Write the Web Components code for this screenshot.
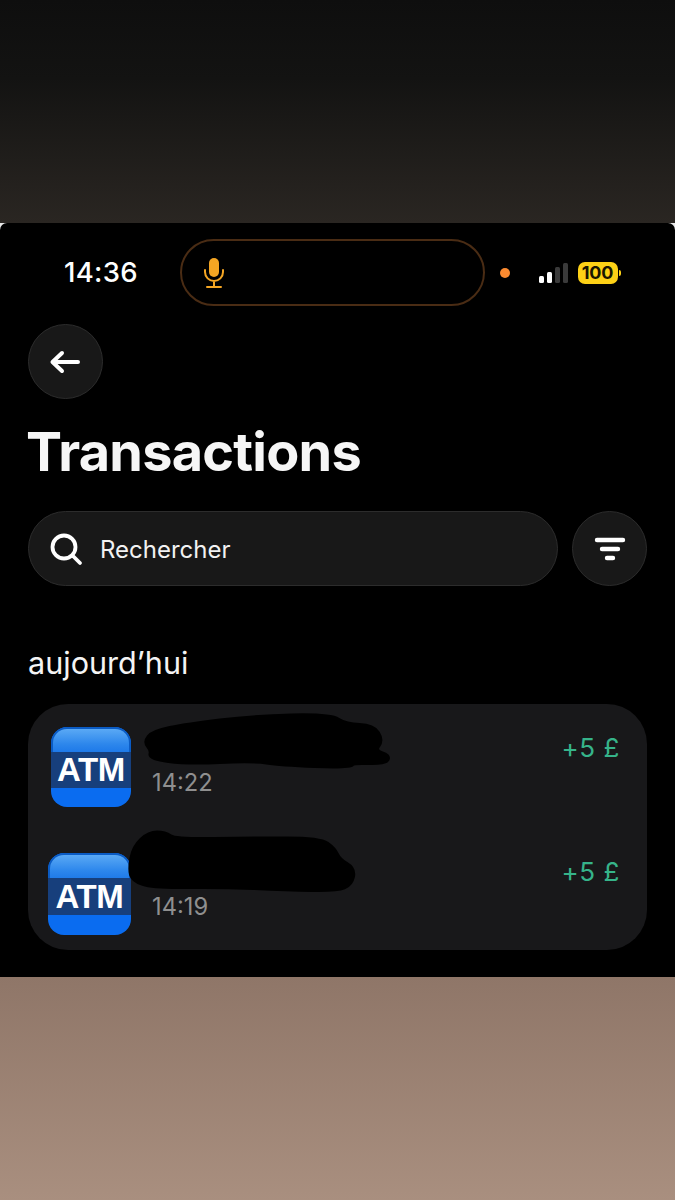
<!DOCTYPE html>
<html lang="fr">
<head>
<meta charset="utf-8">
<title>Transactions</title>
<style>
  html, body { margin: 0; padding: 0; background: #000; }
  body { font-family: Inter, "Liberation Sans", sans-serif; }
  .backdrop-top { height: 223px; background: linear-gradient(#0e0e0e, #131312 35%, #2a2622); }
  .backdrop-bottom { height: 223px; background: linear-gradient(#8f7668, #a98f7f); }
  h1 { margin: 19px 0 0 -2px; font-size: 54px; line-height: 68px; font-weight: 700; letter-spacing: -.75px; color: #f6f6f6; }
  h2 { margin: 58px 0 0; font-size: 30.6px; line-height: 38px; font-weight: 400; color: #f4f4f4; }
  .tools { display: flex; gap: 14px; margin-top: 25px; }
</style>
</head>
<body>

<template id="tpl-status-bar">
  <style>
    :host { display: flex; align-items: center; height: 67px; margin-top: 16px; padding-left: 64px; color: #fff; }
    .time { width: 115.5px; font-size: 27.5px; font-weight: 500; letter-spacing: .3px; line-height: 1; }
    .island { box-sizing: border-box; width: 305px; height: 67px; border: 2px solid #4a2c14; border-radius: 34px;
      display: flex; align-items: center; padding-left: 21px; }
    .dot { width: 10px; height: 10px; border-radius: 50%; background: #fb8a30; margin-left: 15px; }
    .signal { display: flex; align-items: flex-end; gap: 2.5px; margin-left: 29px; height: 20px; }
    .signal i { display: block; width: 5.5px; border-radius: 1.5px; background: #fff; }
    .signal i:nth-child(1) { height: 7px; }
    .signal i:nth-child(2) { height: 11px; }
    .signal i:nth-child(3) { height: 16px; background: #3a3a3a; }
    .signal i:nth-child(4) { height: 20px; background: #3a3a3a; }
    .battery { display: flex; align-items: center; margin-left: 9.5px; }
    .level { width: 40px; height: 22px; border-radius: 7px; background: #fdd116; color: #1a1500;
      font-size: 18px; font-weight: 700; line-height: 22px; text-align: center; letter-spacing: -.2px; }
    .tip { width: 2px; height: 6px; background: #fdd116; border-radius: 0 2px 2px 0; margin-left: 1px; }
  </style>
  <span class="time">14:36</span>
  <div class="island">
    <svg width="22" height="32" viewBox="0 0 22 32" fill="none">
      <rect x="6" y="1" width="10" height="19" rx="5" fill="#f5a623"/>
      <path d="M2 13v2a9 9 0 0 0 18 0v-2M11 24v6M4 30h14" stroke="#f5a623" stroke-width="2" stroke-linecap="round"/>
    </svg>
  </div>
  <span class="dot"></span>
  <div class="signal"><i></i><i></i><i></i><i></i></div>
  <div class="battery"><span class="level">100</span><span class="tip"></span></div>
</template>

<template id="tpl-round-button">
  <style>
    :host { box-sizing: border-box; display: flex; align-items: center; justify-content: center; flex: none;
      width: 75px; height: 75px; border-radius: 50%; background: #181818; border: 1.5px solid #2c2c2c; }
  </style>
  <slot></slot>
</template>

<template id="tpl-search-bar">
  <style>
    :host { box-sizing: border-box; display: flex; align-items: center; flex: 1; height: 75px; padding: 1px 0 0 20px;
      border-radius: 38px; background: #181818; border: 1.5px solid #2c2c2c; color: #f2f2f2; font-size: 24px; }
    svg { margin: -1px 17px 0 0; }
  </style>
  <svg width="34" height="34" viewBox="0 0 34 34" fill="none" stroke="#fff" stroke-width="3.8" stroke-linecap="round">
    <circle cx="15" cy="15" r="11.5"/>
    <path d="M24 24l7 7"/>
  </svg>
  <slot></slot>
</template>

<template id="tpl-atm-icon">
  <style>
    :host { display: block; box-sizing: border-box; flex: none; position: relative; overflow: hidden;
      width: var(--w, 81px); height: var(--h, 81px); border-radius: 16px; background: #0a6cf0; }
    .shine { position: absolute; left: 0; right: 0; top: 0; height: 34%; border-radius: 16px 16px 0 0; background: #0a5bc4; }
    .shine::after { content: ""; position: absolute; inset: 2px 2px 0; border-radius: 14px 14px 0 0;
      background: linear-gradient(#5aa9f5, #2d87ec 60%, #1a76e8); }
    .band { position: absolute; left: 0; right: 0; top: 31%; height: 45%; background: #173f7c;
      display: flex; align-items: center; justify-content: center;
      color: #fff; font-family: "Liberation Sans", Arimo, sans-serif; font-weight: 700;
      font-size: 33px; letter-spacing: -.3px; line-height: 1; }
  </style>
  <div class="shine"></div>
  <div class="band">ATM</div>
</template>

<template id="tpl-tx-row">
  <style>
    :host { display: grid; grid-template-columns: 104px 1fr auto; }
    .info { display: flex; flex-direction: column; }
    .time { color: #8f8f8f; font-size: 23.7px; line-height: 28px; padding-top: var(--time-top, 42px); }
    .amount { color: #36b48a; font-size: 26px; line-height: 30px; padding-top: var(--amount-top, 5px); padding-right: 27px; letter-spacing: .6px; }
  </style>
  <slot name="icon"></slot>
  <div class="info"><span class="time"><slot name="time"></slot></span></div>
  <span class="amount"><slot name="amount"></slot></span>
</template>

<template id="tpl-tx-card">
  <style>
    :host { display: flex; flex-direction: column; position: relative; box-sizing: border-box; height: 246px;
      margin-top: 22px; padding: 23px 0 0 20px; border-radius: 40px; background: #18181a; }
    ::slotted(tx-row:last-of-type) { margin-top: 46px; }
  </style>
  <slot></slot>
</template>

<template id="tpl-app-screen">
  <style>
    /* the light corners are what peeks out behind the rounded black screen */
    :host { display: block; height: 754px; background: linear-gradient(#e8e8e8 8px, #000 8px); color: #fff; }
    .screen { box-sizing: border-box; height: 100%; background: #000; border-radius: 7px 7px 0 0; overflow: hidden; }
    .content { padding: 18px 28px 0; }
  </style>
  <div class="screen">
    <status-bar></status-bar>
    <div class="content">
      <slot></slot>
    </div>
  </div>
</template>

<script>
  // every element only clones its template
  function define(name, tpl){
    customElements.define(name, class extends HTMLElement{
      constructor(){
        super()
        const el = document.querySelector(tpl).content.cloneNode(true)
        this.attachShadow({mode:'open'}).appendChild(el)
      }
    })
  }
  define('status-bar', '#tpl-status-bar')
  define('round-button', '#tpl-round-button')
  define('search-bar', '#tpl-search-bar')
  define('atm-icon', '#tpl-atm-icon')
  define('tx-row', '#tpl-tx-row')
  define('tx-card', '#tpl-tx-card')
  define('app-screen', '#tpl-app-screen')

  // black marker scribble over the card, rounded through the midpoints of its points
  class ScribbleMark extends HTMLElement{
    connectedCallback(){
      const pts = this.getAttribute('points').trim().split(/\s+/).map(p => p.split(',').map(Number))
      const mid = (a, b) => [(a[0] + b[0]) / 2, (a[1] + b[1]) / 2]
      const start = mid(pts[pts.length - 1], pts[0])
      let d = `M${start[0]} ${start[1]}`
      pts.forEach((p, i) => {
        const m = mid(p, pts[(i + 1) % pts.length])
        d += `Q${p[0]} ${p[1]} ${m[0]} ${m[1]}`
      })
      this.attachShadow({mode:'open'}).innerHTML = `
        <style>:host{position:absolute;left:0;top:0;pointer-events:none}svg{display:block}</style>
        <svg width="619" height="246" viewBox="0 0 619 246"><path d="${d}Z" fill="#000" stroke="#000" stroke-width="5" stroke-linejoin="round"/></svg>`
    }
  }
  customElements.define('scribble-mark', ScribbleMark)
</script>

<div class="backdrop-top"></div>

<app-screen>
  <round-button>
    <svg style="margin-left:-2px" width="32" height="26" viewBox="0 0 32 26" fill="none" stroke="#fff" stroke-width="4" stroke-linecap="round" stroke-linejoin="round">
      <path d="M29 13H4M13 4L3.500 13l9.500 9"/>
    </svg>
  </round-button>
  <h1>Transactions</h1>
  <div class="tools">
    <search-bar>Rechercher</search-bar>
    <round-button>
      <svg width="32" height="26" viewBox="0 0 32 26" fill="none" stroke="#fff" stroke-width="4.400" stroke-linecap="round">
        <path d="M3 4h26M8 13h16M13 22h6"/>
      </svg>
    </round-button>
  </div>
  <h2>aujourd’hui</h2>
  <tx-card>
    <tx-row style="--amount-top:6px">
      <atm-icon slot="icon" style="margin-left:3px;--w:80px;--h:80px"></atm-icon>
      <span slot="time">14:22</span>
      <span slot="amount">+5 £</span>
    </tx-row>
    <tx-row style="--time-top:40px;--amount-top:4px">
      <atm-icon slot="icon" style="--w:83px;--h:82px"></atm-icon>
      <span slot="time">14:19</span>
      <span slot="amount">+5 £</span>
    </tx-row>
    <!-- scribbles painted over the names in the screenshot -->
    <scribble-mark points="117,38 125,28 159,21 225,13 302,11 318,21 345,22 354,36 346,47 361,52 357,59 325,58 322,63 252,60 225,56 159,59 122,54 124,46"></scribble-mark>
    <scribble-mark points="102,165 106,143 121,129 137,129 147,136 225,135 292,135 306,145 311,156 326,165 323,180 309,186 259,185 192,182 125,183 105,176"></scribble-mark>
  </tx-card>
</app-screen>

<div class="backdrop-bottom"></div>

</body>
</html>
